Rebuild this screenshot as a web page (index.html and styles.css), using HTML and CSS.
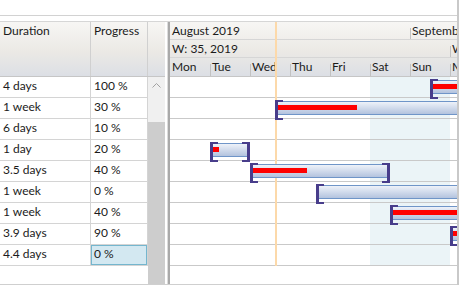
FILE: index.html
```html
<!DOCTYPE html>
<html lang="en">
<head>
  <meta charset="UTF-8" />
  <title>Gantt</title>
  <link rel="stylesheet" href="styles.css">
</head>
<body>
  <div class="window">
    <div class="toolbar"></div>

    <div class="control">
      <!-- Task grid -->
      <div class="grid">
        <div class="grid-head">
          <div class="hcell col-dur">Duration</div>
          <div class="hcell col-prog">Progress</div>
          <div class="hcell col-scroll"></div>
        </div>
        <div class="grid-body">
          <div class="rows">
            <div class="row"><div class="cell col-dur">4 days</div><div class="cell col-prog">100 %</div></div>
            <div class="row"><div class="cell col-dur">1 week</div><div class="cell col-prog">30 %</div></div>
            <div class="row"><div class="cell col-dur">6 days</div><div class="cell col-prog">10 %</div></div>
            <div class="row"><div class="cell col-dur">1 day</div><div class="cell col-prog">20 %</div></div>
            <div class="row"><div class="cell col-dur">3.5 days</div><div class="cell col-prog">40 %</div></div>
            <div class="row"><div class="cell col-dur">1 week</div><div class="cell col-prog">0 %</div></div>
            <div class="row"><div class="cell col-dur">1 week</div><div class="cell col-prog">40 %</div></div>
            <div class="row"><div class="cell col-dur">3.9 days</div><div class="cell col-prog">90 %</div></div>
            <div class="row"><div class="cell col-dur">4.4 days</div><div class="cell col-prog selected">0 %</div></div>
          </div>
          <div class="scrollbar">
            <div class="scroll-track">
              <svg width="17" height="17" viewBox="0 0 17 17"><polyline points="4.5,10.5 8.5,6.5 12.5,10.5" fill="none" stroke="#a2a2a2" stroke-width="1"/></svg>
            </div>
            <div class="scroll-thumb"></div>
          </div>
        </div>
      </div>

      <div class="splitter"></div>

      <!-- Gantt chart -->
      <div class="gantt">
        <div class="timescale">
          <div class="scale-row">
            <div class="scale-cell span-6">August 2019</div>
            <div class="scale-cell span-7">September 2019</div>
          </div>
          <div class="scale-row">
            <div class="scale-cell span-7">W: 35, 2019</div>
            <div class="scale-cell span-7">W: 36, 2019</div>
          </div>
          <div class="scale-row">
            <div class="scale-cell span-1">Mon</div>
            <div class="scale-cell span-1">Tue</div>
            <div class="scale-cell span-1">Wed</div>
            <div class="scale-cell span-1">Thu</div>
            <div class="scale-cell span-1">Fri</div>
            <div class="scale-cell span-1">Sat</div>
            <div class="scale-cell span-1">Sun</div>
            <div class="scale-cell span-1">Mon</div>
          </div>
        </div>

        <div class="chart">
          <div class="weekend"></div>
          <div class="chart-row">
            <div class="bar" style="left:260px;width:120px"><div class="bar-body"></div><div class="bar-progress" style="width:114px"></div></div>
          </div>
          <div class="chart-row">
            <div class="bar" style="left:105px;width:270px"><div class="bar-body"></div><div class="bar-progress" style="width:79px"></div></div>
          </div>
          <div class="chart-row"></div>
          <div class="chart-row">
            <div class="bar" style="left:40px;width:40px"><div class="bar-body"></div><div class="bar-progress" style="width:6px"></div></div>
          </div>
          <div class="chart-row">
            <div class="bar" style="left:80px;width:140px"><div class="bar-body"></div><div class="bar-progress" style="width:54px"></div></div>
          </div>
          <div class="chart-row">
            <div class="bar" style="left:146px;width:220px"><div class="bar-body"></div></div>
          </div>
          <div class="chart-row">
            <div class="bar" style="left:220px;width:200px"><div class="bar-body"></div><div class="bar-progress" style="width:78px"></div></div>
          </div>
          <div class="chart-row">
            <div class="bar" style="left:280px;width:150px"><div class="bar-body"></div><div class="bar-progress" style="width:130px"></div></div>
          </div>
          <div class="chart-row"></div>
        </div>

        <div class="today"></div>
      </div>
    </div>
  </div>
</body>
</html>
```

FILE: styles.css
```css
/* General */
* { box-sizing: border-box; }

body {
  margin: 0;
  font-family: Lato, "Segoe UI", sans-serif;
  font-size: 12px;
  color: #1b1b1b;
  background: #fff;
}

.window {
  width: 459px;
  height: 285px;
  border-right: 2px solid #c9c9c9;
  display: flex;
  flex-direction: column;
  overflow: hidden;
}

.toolbar {
  flex: none;
  height: 16px;
  border-bottom: 1px solid #d2d2d2;
}

.control {
  flex: 1;
  min-height: 0;
  margin-top: 5px;
  display: flex;
  border-top: 1px solid #d6d6d6;
  border-bottom: 1px solid #cfcfcf;
}

/* Task grid */
.grid {
  flex: none;
  width: 165px;
  display: flex;
  flex-direction: column;
}

.grid-head {
  height: 55px;
  display: flex;
  border-bottom: 1px solid #c6c6c6;
  background: linear-gradient(#f7f6f4, #ebe9e5 55%, #dcdfe5);
}

.hcell {
  padding: 3px 0 0 3px;
  line-height: 12px;
  border-right: 1px solid #d0d0d0;
}

.col-dur { width: 91px; }
.col-prog { width: 57px; }
.col-scroll { width: 17px; border-right: none; }

.grid-body {
  flex: 1;
  min-height: 0;
  display: flex;
}

.rows { width: 148px; }

.row {
  display: flex;
  height: 21px;
  border-bottom: 1px solid #d4d4d4;
}

.cell {
  padding-left: 3px;
  line-height: 18px;
  border-right: 1px solid #d4d4d4;
}

.cell.selected {
  background: #d3e8f1;
  box-shadow: inset 0 0 0 1px #74b6ce;
}

.scrollbar {
  width: 17px;
  display: flex;
  flex-direction: column;
}

.scroll-track {
  height: 45px;
  background: #f0f0f0;
}

.scroll-track svg { display: block; }

.scroll-thumb {
  flex: 1;
  background: #cdcdcd;
}

.splitter {
  flex: none;
  width: 3px;
  background: #fff;
  border-right: 1px solid #dcdcdc;
}

/* Gantt chart */
.gantt {
  flex: 1;
  position: relative;
  overflow: hidden;
  border-left: 2px solid #a9a9a9;
  display: flex;
  flex-direction: column;
}

.timescale {
  flex: none;
  border-bottom: 1px solid #c6c6c6;
  background: linear-gradient(#f7f6f4, #ebe9e5 55%, #dcdfe5);
}

.scale-row {
  display: flex;
  height: 18px;
  border-bottom: 1px solid #d6d6d6;
}

.scale-row:last-child {
  border-bottom: none;
}

.scale-cell {
  flex: none;
  padding: 3px 0 0 2px;
  line-height: 12px;
  white-space: nowrap;
  background: linear-gradient(#c2c2c2, #c2c2c2) no-repeat 0 6px / 1px 100%;
}

.scale-cell:first-child { background: none; }

.span-1 { width: 40px; }
.span-6 { width: 240px; }
.span-7 { width: 280px; }

.chart {
  flex: 1;
  position: relative;
}

.weekend {
  position: absolute;
  left: 200px;
  top: 0;
  width: 80px;
  height: 189px;
  background: #ebf4f7;
}

.chart-row {
  position: relative;
  height: 21px;
  border-bottom: 1px solid #c9c9c9;
}

.today {
  position: absolute;
  left: 105px;
  top: 0;
  width: 2px;
  height: 244px;
  background: #fcd9aa;
  z-index: 1;
}

/* Task bars */
.bar {
  position: absolute;
  top: 2px;
  height: 16px;
  z-index: 2;
}

.bar-body {
  height: 14px;
  margin-top: 1px;
  border: 1px solid #6f95c8;
  background: linear-gradient(#eef2f9, #b3c3de);
}

.bar::before,
.bar::after {
  content: "";
  position: absolute;
  top: 0;
  width: 5px;
  height: 16px;
  border: 2px solid #483d8b;
}

.bar::before { left: 0; border-left-width: 3px; border-right: none; }
.bar::after { right: 0; border-right-width: 3px; border-left: none; }

.bar-progress {
  position: absolute;
  top: 5px;
  left: 3px;
  height: 5px;
  background: #ff0000;
}
```
